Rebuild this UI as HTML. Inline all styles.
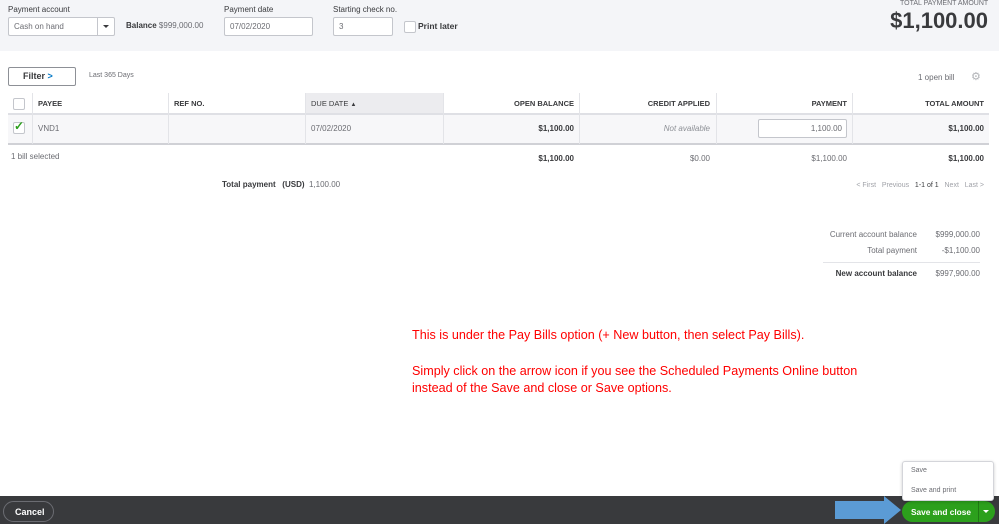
<!DOCTYPE html>
<html><head><meta charset="utf-8"><style>
*{box-sizing:border-box;margin:0;padding:0}
body{width:999px;height:524px;position:relative;overflow:hidden;background:#fff;font-family:"Liberation Sans",sans-serif;color:#393a3d}
.a{position:absolute;white-space:nowrap}
.s{font-size:8px}
.g{color:#6b6c72}
.b{font-weight:bold}
.box{position:absolute;border:1px solid #c4c6cc;background:#fff;border-radius:2px}
.r{text-align:right}
.hd{font-size:7.5px;font-weight:bold;color:#393a3d}
.vl{position:absolute;width:1px;background:#e3e4e8}
.red{color:#f00;font-size:12.6px;font-family:"Liberation Sans",sans-serif}
</style></head><body>
<div class="a" style="left:0;top:0;width:999px;height:51px;background:#f4f5f8"></div>
<div class="a s" style="left:8px;top:5px">Payment account</div>
<div class="box" style="left:8px;top:17px;width:107px;height:19px"></div>
<div class="a s g" style="left:14px;top:22px">Cash on hand</div>
<div class="a" style="left:97px;top:17px;width:1px;height:19px;background:#c4c6cc"></div>
<div class="a" style="left:103px;top:25px;border-left:3px solid transparent;border-right:3px solid transparent;border-top:3px solid #393a3d"></div>
<div class="a s" style="left:126px;top:21px"><b>Balance</b> <span class="g">$999,000.00</span></div>
<div class="a s" style="left:224px;top:5px">Payment date</div>
<div class="box" style="left:224px;top:17px;width:89px;height:19px"></div>
<div class="a s g" style="left:230px;top:22px">07/02/2020</div>
<div class="a s" style="left:333px;top:5px">Starting check no.</div>
<div class="box" style="left:333px;top:17px;width:60px;height:19px"></div>
<div class="a s g" style="left:339px;top:22px">3</div>
<div class="box" style="left:404px;top:21px;width:12px;height:12px"></div>
<div class="a s b" style="left:418px;top:21px;font-size:8.5px">Print later</div>
<div class="a g" style="left:900px;top:0px;font-size:7px">TOTAL PAYMENT AMOUNT</div>
<div class="a b" style="right:11px;top:8px;font-size:22px;color:#393a3d">$1,100.00</div>

<div class="box" style="left:8px;top:67px;width:68px;height:19px;border-color:#8d9096"></div>
<div class="a b" style="left:23px;top:71px;font-size:9px">Filter <span style="color:#0077c5">&gt;</span></div>
<div class="a s g" style="left:89px;top:72px;font-size:7px">Last 365 Days</div>
<div class="a s g" style="left:918px;top:73px">1 open bill</div>
<div class="a g" style="left:971px;top:70px;font-size:11px;color:#b0b2b6">⚙</div>

<div class="a" style="left:305px;top:93px;width:138px;height:21px;background:#ececef"></div>
<div class="a" style="left:8px;top:114px;width:981px;height:30px;background:#f7f7f9"></div>
<div class="a" style="left:8px;top:113px;width:981px;height:2px;background:#dfe0e5"></div>
<div class="a" style="left:8px;top:143px;width:981px;height:2px;background:#d0d1d6"></div>
<div class="vl" style="left:32px;top:93px;height:51px"></div>
<div class="vl" style="left:168px;top:93px;height:51px"></div>
<div class="vl" style="left:305px;top:93px;height:51px"></div>
<div class="vl" style="left:443px;top:93px;height:51px"></div>
<div class="vl" style="left:579px;top:93px;height:51px"></div>
<div class="vl" style="left:716px;top:93px;height:51px"></div>
<div class="vl" style="left:852px;top:93px;height:51px"></div>
<div class="box" style="left:13px;top:98px;width:12px;height:12px"></div>
<div class="a hd" style="left:38px;top:99px">PAYEE</div>
<div class="a hd" style="left:174px;top:99px">REF NO.</div>
<div class="a hd" style="left:311px;top:99px;font-weight:normal">DUE DATE <span style="font-size:6px">▲</span></div>
<div class="a hd r" style="left:443px;width:131px;top:99px">OPEN BALANCE</div>
<div class="a hd r" style="left:579px;width:131px;top:99px">CREDIT APPLIED</div>
<div class="a hd r" style="left:716px;width:131px;top:99px">PAYMENT</div>
<div class="a hd r" style="left:852px;width:132px;top:99px">TOTAL AMOUNT</div>
<div class="box" style="left:13px;top:122px;width:12px;height:12px"></div>
<div class="a" style="left:14px;top:119px;color:#2ca01c;font-size:12px;font-weight:bold">✓</div>
<div class="a s g" style="left:38px;top:124px">VND1</div>
<div class="a s g" style="left:311px;top:124px">07/02/2020</div>
<div class="a s b r" style="left:443px;width:131px;top:124px">$1,100.00</div>
<div class="a s g r" style="left:579px;width:131px;top:124px;font-style:italic;color:#8d9096">Not available</div>
<div class="box" style="left:758px;top:119px;width:89px;height:19px"></div>
<div class="a s g r" style="left:758px;width:84px;top:124px">1,100.00</div>
<div class="a s b r" style="left:852px;width:132px;top:124px">$1,100.00</div>
<div class="a s g" style="left:11px;top:152px">1 bill selected</div>
<div class="a s b r" style="left:443px;width:131px;top:154px">$1,100.00</div>
<div class="a s g r" style="left:579px;width:131px;top:154px">$0.00</div>
<div class="a s g r" style="left:716px;width:131px;top:154px">$1,100.00</div>
<div class="a s b r" style="left:852px;width:132px;top:154px">$1,100.00</div>
<div class="a s" style="left:222px;top:180px"><b>Total payment &nbsp;&nbsp;(USD)</b> &nbsp;<span class="g">1,100.00</span></div>
<div class="a g r" style="right:15px;top:182px;font-size:7px;color:#a0a2a8">&lt; First &nbsp;&nbsp;Previous &nbsp;&nbsp;<span style="color:#393a3d">1-1 of 1</span> &nbsp;&nbsp;Next &nbsp;&nbsp;Last &gt;</div>

<div class="a s g r" style="right:82px;top:230px">Current account balance</div>
<div class="a s g r" style="right:19px;top:230px">$999,000.00</div>
<div class="a s g r" style="right:82px;top:246px">Total payment</div>
<div class="a s g r" style="right:19px;top:246px">-$1,100.00</div>
<div class="a" style="left:823px;top:262px;width:157px;height:1px;background:#e3e4e8"></div>
<div class="a s b r" style="right:82px;top:269px">New account balance</div>
<div class="a s g r" style="right:19px;top:269px">$997,900.00</div>

<div class="a red" style="left:412px;top:328px">This is under the Pay Bills option (+ New button, then select Pay Bills).</div>
<div class="a red" style="left:412px;top:364px">Simply click on the arrow icon if you see the Scheduled Payments Online button</div>
<div class="a red" style="left:412px;top:381px">instead of the Save and close or Save options.</div>

<div class="a" style="left:0;top:496px;width:999px;height:28px;background:#393a3d"></div>
<div class="a" style="left:3px;top:501px;width:51px;height:21px;border:1px solid #6b6c72;border-radius:11px"></div>
<div class="a b" style="left:15px;top:507px;color:#fff;font-size:9px">Cancel</div>
<svg class="a" style="left:834px;top:496px" width="68" height="28"><polygon points="1,5 50,5 50,0 67,14 50,28 50,23 1,23" fill="#5b9bd5"/></svg>
<div class="a" style="left:902px;top:501px;width:93px;height:21px;background:#2ca01c;border-radius:11px"></div>
<div class="a" style="left:978px;top:501px;width:1px;height:21px;background:#1f7a13"></div>
<div class="a b" style="left:911px;top:507px;color:#fff;font-size:8.3px">Save and close</div>
<div class="a" style="left:983px;top:510px;border-left:3px solid transparent;border-right:3px solid transparent;border-top:3px solid #fff"></div>
<div class="a" style="left:902px;top:461px;width:92px;height:40px;background:#fff;border:1px solid #d4d5da;border-radius:3px;box-shadow:0 1px 3px rgba(0,0,0,.2)"></div>
<div class="a g" style="left:911px;top:467px;font-size:7px">Save</div>
<div class="a g" style="left:911px;top:487px;font-size:7px">Save and print</div>
</body></html>
